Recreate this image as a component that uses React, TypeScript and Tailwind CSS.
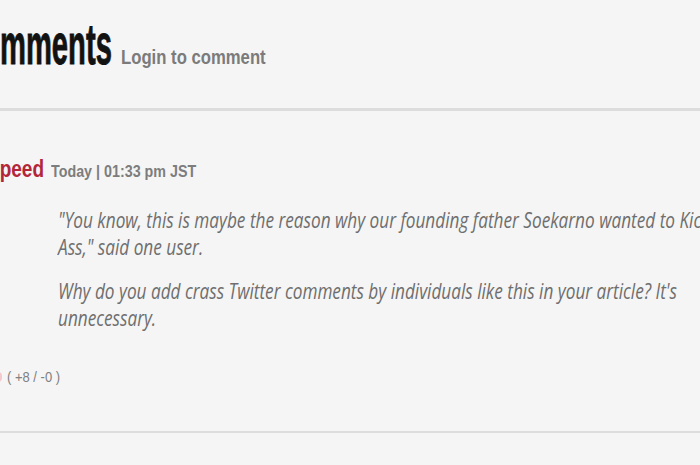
export default function App() {
  return (
    <div className="w-[700px] h-[465px] overflow-hidden bg-[#f5f5f5] font-['Liberation_Sans',Arial,sans-serif]">
      <div className="h-[108px] pt-[33.5px] flex items-baseline whitespace-nowrap">
        <span className="ml-[-39px] inline-block leading-none text-[36px] font-bold text-[#121212] [-webkit-text-stroke:0.6px_#121212] origin-[0_84.65%] scale-x-[0.811] scale-y-[1.6]">
          Comments
        </span>
        <span className="ml-[-26px] inline-block leading-none text-[16.7px] font-bold text-[#7b7b7b] origin-[0_84.65%] scale-y-[1.26]">
          Login to comment
        </span>
      </div>
      <div className="h-[3px] bg-[#dcdcdc]" />
      <div className="mt-[50px] flex items-baseline whitespace-nowrap">
        <span className="ml-[-13px] inline-block leading-none text-[19px] font-bold text-[#b3263a] origin-[0_84.65%] scale-y-[1.23]">
          Speed
        </span>
        <span className="ml-[7px] inline-block leading-none text-[14.3px] font-bold text-[#7d7d7d] origin-[0_84.65%] scale-y-[1.15]">
          Today | 01:33 pm JST
        </span>
      </div>
      <div className="pl-[58px] mt-[27.9px] italic text-[17.2px] leading-[27px] text-[#6e6e6e] font-['Open_Sans',sans-serif] whitespace-nowrap">
        <div className="origin-[0_20.2px] scale-y-[1.25]">
          "You know, this is maybe the reason why our founding father Soekarno wanted to Kick
        </div>
        <div className="origin-[0_20.2px] scale-y-[1.25]">Ass," said one user.</div>
        <div className="mt-[17px] origin-[0_20.2px] scale-y-[1.25]">
          Why do you add crass Twitter comments by individuals like this in your article? It's
        </div>
        <div className="origin-[0_20.2px] scale-y-[1.25]">unnecessary.</div>
      </div>
      <div className="mt-[38.3px] flex items-baseline whitespace-nowrap">
        <span className="ml-[-12px] inline-block w-[14px] h-[10px] rounded-sm bg-[#f3c9cf]" />
        <span className="ml-[5px] inline-block leading-none text-[13px] text-[#808080] origin-[0_84.65%] scale-y-[1.1]">
          ( +8 / -0 )
        </span>
      </div>
      <div className="mt-[47px] h-[2px] bg-[#dddddd]" />
    </div>
  );
}
